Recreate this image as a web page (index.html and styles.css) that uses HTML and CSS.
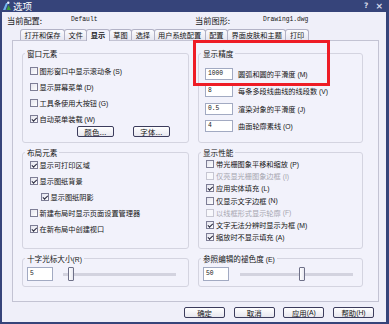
FILE: index.html
```html
<!DOCTYPE html>
<html lang="zh-CN">
<head>
<meta charset="utf-8">
<title>选项</title>
<link rel="stylesheet" href="styles.css">
</head>
<body>
<div class="window">
  <div class="titlebar">
    <svg class="appicon" width="10" height="10" viewBox="0 0 10 10">
      <path d="M1 9 L4 2 L6 2 L3.5 9 Z" fill="#6fb2ef"/>
      <path d="M4.5 9 L6.5 4 L9 9 Z" fill="#3f9d3a"/>
      <circle cx="6.3" cy="1.8" r="1.2" fill="#e8f0ff"/>
    </svg>
    <span class="title">选项</span>
    <span class="ctrl">?</span>
    <span class="ctrl close">×</span>
  </div>
  <div class="client">
    <div class="info">
      <span>当前配置:</span>
      <span class="mono">Default</span>
      <span>当前图形:</span>
      <span class="mono">Drawing1.dwg</span>
    </div>
    <div class="tabs">
      <div class="tab">打开和保存</div>
      <div class="tab">文件</div>
      <div class="tab active">显示</div>
      <div class="tab">草图</div>
      <div class="tab">选择</div>
      <div class="tab">用户系统配置</div>
      <div class="tab">配置</div>
      <div class="tab">界面皮肤和主题</div>
      <div class="tab">打印</div>
    </div>
    <div class="panel">
      <div class="highlight"></div>
      <div class="grid">
        <div class="group">
          <div class="legend">窗口元素</div>
          <div class="checks checks-win">
            <div class="row"><span class="cb"></span>图形窗口中显示滚动条<span class="k"> (S)</span></div>
            <div class="row"><span class="cb"></span>显示屏幕菜单<span class="k"> (D)</span></div>
            <div class="row"><span class="cb"></span>工具条使用大按钮<span class="k"> (G)</span></div>
            <div class="row"><span class="cb on"></span>自动菜单装载<span class="k"> (W)</span></div>
          </div>
          <div class="btnrow">
            <div class="btn small">颜色...</div>
            <div class="btn small">字体...</div>
          </div>
        </div>

        <div class="group">
          <div class="legend">显示精度</div>
          <div class="fields">
            <div class="field"><span class="inp">1000</span><span class="flabel">圆弧和圆的平滑度<span class="k"> (M)</span></span></div>
            <div class="field"><span class="inp">8</span><span class="flabel">每条多段线曲线的线段数<span class="k"> (V)</span></span></div>
            <div class="field"><span class="inp">0.5</span><span class="flabel">渲染对象的平滑度<span class="k"> (J)</span></span></div>
            <div class="field"><span class="inp">4</span><span class="flabel">曲面轮廓素线<span class="k"> (O)</span></span></div>
          </div>
        </div>

        <div class="group">
          <div class="legend">布局元素</div>
          <div class="checks checks-layout">
            <div class="row"><span class="cb on"></span>显示可打印区域</div>
            <div class="row"><span class="cb on"></span>显示图纸背景</div>
            <div class="row indent"><span class="cb on"></span>显示图纸阴影</div>
            <div class="row"><span class="cb"></span>新建布局时显示页面设置管理器</div>
            <div class="row"><span class="cb on"></span>在新布局中创建视口</div>
          </div>
        </div>

        <div class="group">
          <div class="legend">显示性能</div>
          <div class="checks checks-perf">
            <div class="row"><span class="cb"></span>带光栅图象平移和缩放<span class="k"> (P)</span></div>
            <div class="row off"><span class="cb"></span>仅亮显光栅图象边框<span class="k"> (I)</span></div>
            <div class="row"><span class="cb on"></span>应用实体填充<span class="k"> (L)</span></div>
            <div class="row"><span class="cb"></span>仅显示文字边框<span class="k"> (N)</span></div>
            <div class="row off"><span class="cb"></span>以线框形式显示轮廓<span class="k"> (F)</span></div>
            <div class="row"><span class="cb on"></span>文字无法分辨时显示为框<span class="k"> (M)</span></div>
            <div class="row"><span class="cb on"></span>缩放时不显示填充<span class="k"> (A)</span></div>
          </div>
        </div>

        <div class="group">
          <div class="legend">十字光标大小<span class="k">(R)</span></div>
          <div class="sliderrow">
            <span class="inp tall">5</span>
            <div class="slider slider-left"><span class="thumb"></span></div>
          </div>
        </div>

        <div class="group">
          <div class="legend">参照编辑的褪色度<span class="k"> (E)</span></div>
          <div class="sliderrow">
            <span class="inp tall">50</span>
            <div class="slider slider-right"><span class="thumb"></span></div>
          </div>
        </div>
      </div>
    </div>
    <div class="buttons">
      <div class="btn">确定</div>
      <div class="btn">取消</div>
      <div class="btn">应用<span class="k">(A)</span></div>
      <div class="btn">帮助<span class="k">(H)</span></div>
    </div>
  </div>
</div>
</body>
</html>
```

FILE: styles.css
```css
html, body {
  margin: 0;
  padding: 0;
  width: 389px;
  height: 324px;
  overflow: hidden;
}

body {
  background: #36447a;
  font-family: "Noto Sans CJK SC", "Noto Sans", sans-serif;
  font-size: 7.2px;
  color: #141414;
}

.window {
  box-sizing: border-box;
  height: 324px;
  padding: 0 3px 2px 2px;
  display: flex;
  flex-direction: column;
}

.titlebar {
  height: 12px;
  display: flex;
  align-items: center;
  color: #ffffff;
}

.appicon {
  flex: none;
}

.title {
  margin-left: 1px;
  font-size: 9.5px;
  line-height: 12px;
  flex: 1;
}

.ctrl {
  font-family: "DejaVu Sans", sans-serif;
  font-size: 7.5px;
  font-weight: bold;
  color: #d6daea;
  line-height: 12px;
}

.close {
  margin-left: 7px;
  margin-right: 3px;
  font-size: 9px;
}

.client {
  flex: 1;
  background: #efeff9;
  display: flex;
  flex-direction: column;
}

.info {
  height: 15px;
  display: grid;
  grid-template-columns: 64px 124px 68px auto;
  align-items: center;
  padding-left: 5px;
  font-size: 8.2px;
}

.mono {
  font-family: "Liberation Mono", monospace;
  font-size: 6.3px;
}

.tabs {
  display: flex;
  margin-top: 2px;
  padding-left: 19px;
  height: 11px;
  position: relative;
  z-index: 2;
}

.tab {
  box-sizing: border-box;
  padding: 0 3.5px;
  border: 1px solid #b2b2c6;
  border-bottom: none;
  border-radius: 3px 3px 0 0;
  margin-left: -1px;
  background: linear-gradient(#fbfbfe, #e6e6f0);
  line-height: 10px;
}

.tab.active {
  background: #f2f2fb;
  margin-bottom: -1px;
  font-weight: bold;
}

.panel {
  position: relative;
  box-sizing: border-box;
  height: 262px;
  margin: 0 7px 0 10px;
  border: 1px solid #c3c3d3;
  background: #f2f2fb;
  padding: 12px 15px 14px 9px;
}

.highlight {
  position: absolute;
  left: 180px;
  top: -1px;
  width: 137px;
  height: 46px;
  box-sizing: border-box;
  border: 3px solid #ee1c25;
  z-index: 3;
}

.grid {
  display: grid;
  grid-template-columns: 167px 165px;
  grid-template-rows: 90px 97px 29px;
  column-gap: 9px;
  row-gap: 9px;
}

.group {
  box-sizing: border-box;
  border: 1px solid #d4d4e0;
  border-radius: 3px;
  padding-left: 7px;
}

.legend {
  width: fit-content;
  height: 9px;
  line-height: 9px;
  margin: -5px 0 0 -5px;
  padding: 0 2px;
  background: #f2f2fb;
  font-size: 7.6px;
}

.k {
  font-family: "Liberation Sans", sans-serif;
  font-size: 6.8px;
}

.checks {
  display: flex;
  flex-direction: column;
}

.checks-win {
  margin-top: 8px;
  gap: 6px;
}

.checks-layout {
  margin-top: 3px;
  gap: 6px;
}

.checks-perf {
  margin-top: 1px;
}

.row {
  height: 10px;
  display: flex;
  align-items: center;
  gap: 1.5px;
  white-space: nowrap;
}

.checks-perf .row {
  height: 12.2px;
  gap: 2px;
}

.row.indent {
  margin-left: 11px;
}

.row.off {
  color: #a6a6b0;
}

.cb {
  box-sizing: border-box;
  width: 8px;
  height: 8px;
  border: 1px solid #7e7e96;
  background: linear-gradient(135deg, #e4e4ee, #ffffff);
  display: flex;
  align-items: center;
  justify-content: center;
  flex: none;
}

.row.off .cb {
  border-color: #c6c6d2;
  background: #f8f8fc;
}

.cb.on::after {
  content: "";
  width: 1.6px;
  height: 3.6px;
  border-right: 1.3px solid #23233a;
  border-bottom: 1.3px solid #23233a;
  transform: translate(0, -0.6px) rotate(45deg);
}

.btnrow {
  display: flex;
  gap: 19px;
  margin-top: 2px;
  padding-left: 47px;
}

.btn {
  box-sizing: border-box;
  width: 41px;
  height: 11px;
  border: 1px solid #3c3c5c;
  border-radius: 2px;
  background: linear-gradient(#ffffff, #e7e7ef);
  display: flex;
  align-items: center;
  justify-content: center;
  font-size: 7.4px;
  line-height: 9px;
}

.btn.small {
  width: 37px;
  letter-spacing: 0.3px;
}

.fields {
  display: flex;
  flex-direction: column;
  gap: 5.33px;
  margin-top: 10px;
  margin-left: -1px;
}

.field {
  height: 12px;
  display: flex;
  align-items: center;
  white-space: nowrap;
}

.inp {
  box-sizing: border-box;
  width: 28px;
  height: 12px;
  border: 1px solid #a2aac2;
  background: #ffffff;
  font-family: "Liberation Mono", monospace;
  font-size: 6.3px;
  line-height: 10px;
  padding-left: 2px;
  flex: none;
}

.flabel {
  margin-left: 5px;
}

.sliderrow {
  display: flex;
  align-items: center;
  margin-top: 4px;
  margin-left: -3px;
}

.inp.tall {
  width: 26px;
  height: 14px;
  line-height: 12px;
}

.slider {
  width: 113px;
  height: 14px;
  display: flex;
  background: linear-gradient(#d3d3df, #d3d3df) center / 100% 3px no-repeat;
}

.slider-left {
  margin-left: 10px;
}

.slider-right {
  margin-left: 11px;
}

.thumb {
  box-sizing: border-box;
  width: 6px;
  height: 14px;
  border: 1px solid #6e7088;
  border-radius: 1px;
  background: linear-gradient(90deg, #ffffff, #e8e8f0);
}

.slider-left .thumb {
  margin-left: 5px;
}

.slider-right .thumb {
  margin-left: 59px;
}

.buttons {
  display: flex;
  justify-content: flex-end;
  gap: 8.67px;
  margin: 5px 12px 0 0;
  height: 11px;
}
```
